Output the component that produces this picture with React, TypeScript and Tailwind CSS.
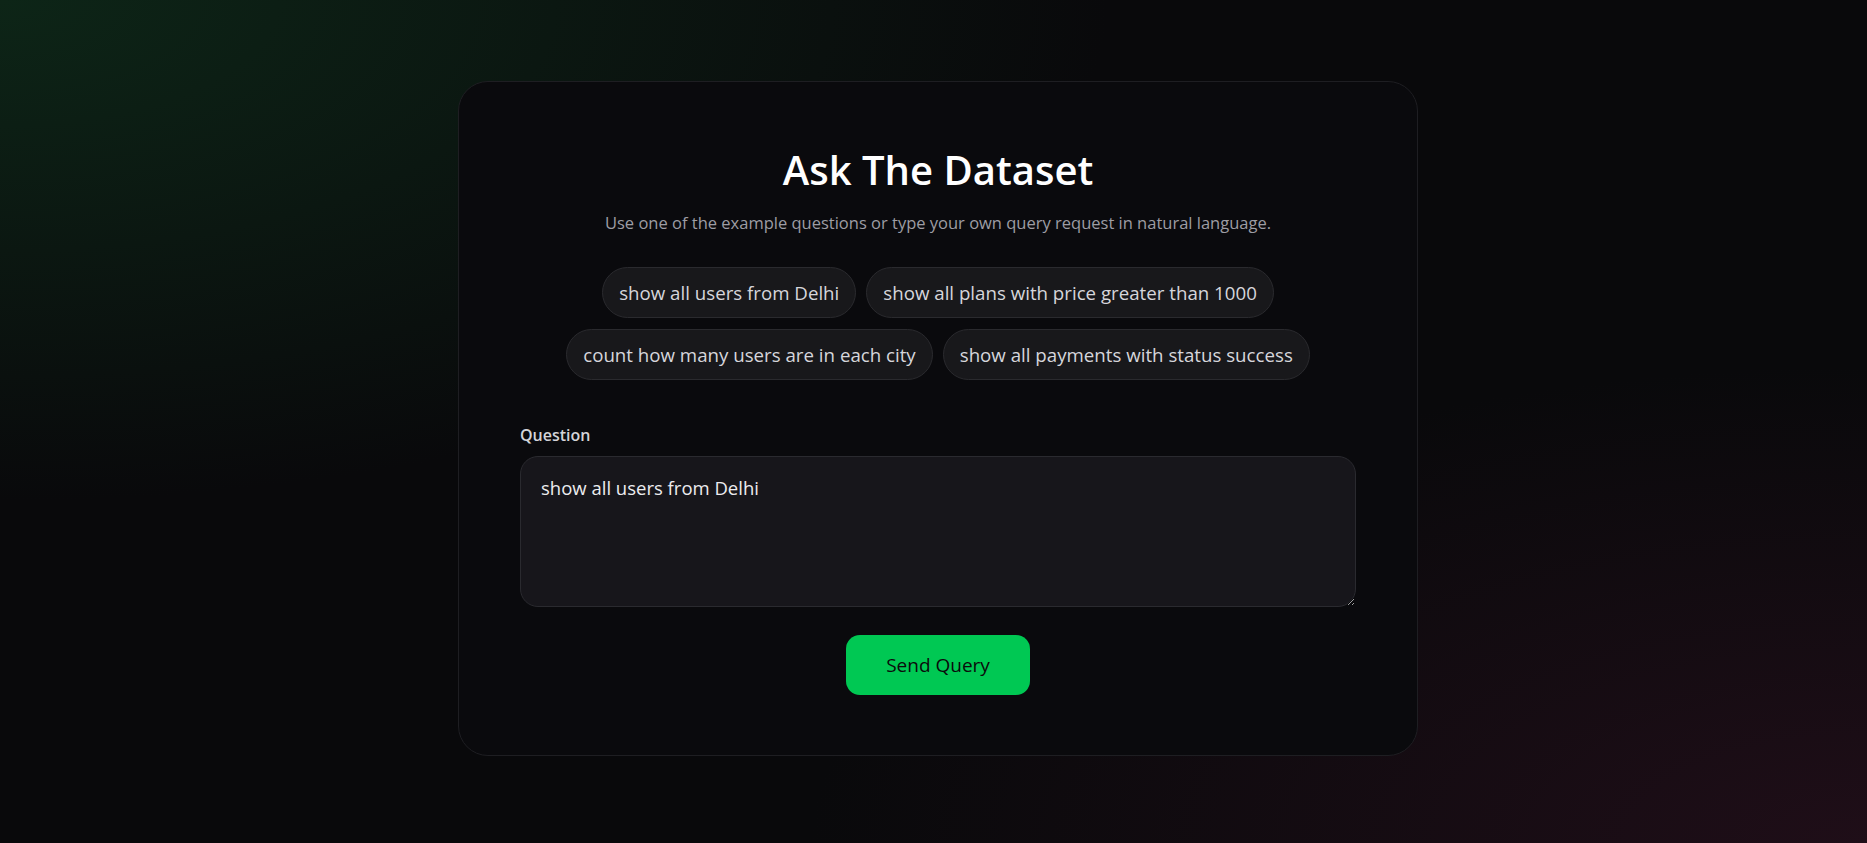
const examples = [
  'show all users from Delhi',
  'show all plans with price greater than 1000',
  'count how many users are in each city',
  'show all payments with status success',
];

export default function App() {
  return (
    <div className="min-h-screen w-full bg-[#09090b] bg-[radial-gradient(ellipse_at_top_left,#0d2517_0%,transparent_42%),radial-gradient(ellipse_at_bottom_right,#1f0e18_0%,transparent_40%)] pl-[9px] pt-[81px] pb-[88px] font-['Open_Sans',sans-serif]">
      <div className="mx-auto flex w-[960px] flex-col items-center rounded-[30px] border border-[#1e1e22] bg-[#0a0a0d] px-[61px] pt-[64px] pb-[60px]">
        <h1 className="text-[40px] leading-[48px] font-semibold text-white">Ask The Dataset</h1>
        <p className="mt-[17px] text-[16.5px] leading-[24px] text-[#9d9da4]">
          Use one of the example questions or type your own query request in natural language.
        </p>

        <div className="mt-[32px] flex w-full flex-wrap justify-center gap-x-[10px] gap-y-[11px]">
          {examples.map((q) => (
            <button
              key={q}
              type="button"
              className="rounded-full border border-[#2a2a2e] bg-[#18181b] px-4 py-[11px] text-[18.7px] leading-[27px] text-[#d6d6db]"
            >
              {q}
            </button>
          ))}
        </div>

        <div className="mt-[43px] flex w-full flex-col">
          <label className="text-[16px] leading-[24px] font-semibold text-[#d4d4d8]">Question</label>
          <textarea
            defaultValue="show all users from Delhi"
            className="mt-[9px] h-[151px] w-full rounded-[18px] border border-[#2a2a2f] bg-[#17161b] px-5 pt-[17px] text-[18.5px] leading-[28px] text-[#ececef] outline-none"
          />
        </div>

        <button
          type="button"
          className="mt-[28px] h-[60px] w-[184px] rounded-[14px] bg-[#00c853] text-[19px] text-[#0b0b0b]"
        >
          Send Query
        </button>
      </div>
    </div>
  );
}
